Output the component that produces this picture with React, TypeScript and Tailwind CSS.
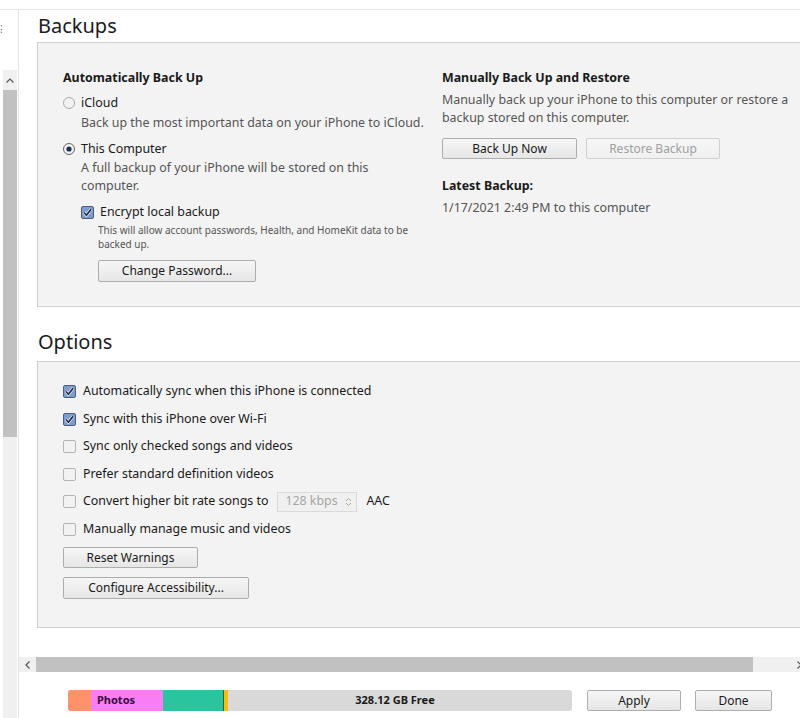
import { ReactNode } from 'react';

const FONT = { fontFamily: '"Noto Sans", "Open Sans", sans-serif' };

function Btn({ children, w, disabled }: { children: ReactNode; w: string; disabled?: boolean }) {
  return (
    <div
      className={`${w} h-[21px] flex items-center justify-center rounded-[2px] border border-[#adadad] bg-gradient-to-b from-[#f6f6f6] to-[#e6e6e6] text-[12px] leading-none ${
        disabled ? 'text-[#a0a0a0] border-[#d0d0d0] from-[#f4f4f4] to-[#f0f0f0]' : 'text-[#1a1a1a]'
      }`}
    >
      {children}
    </div>
  );
}

function Check({ on }: { on?: boolean }) {
  return (
    <svg width="13" height="13" viewBox="0 0 13 13" className="shrink-0">
      {on ? (
        <>
          <rect x="0.5" y="0.5" width="12" height="12" rx="1.5" fill="#7f9ccc" stroke="#4c5e80" />
          <path d="M3 6.5 L5.4 9.2 L10 3.4" fill="none" stroke="#fff" strokeWidth="3" />
          <path d="M3 6.5 L5.4 9.2 L10 3.4" fill="none" stroke="#1d2b4c" strokeWidth="1.7" />
        </>
      ) : (
        <rect x="0.5" y="0.5" width="12" height="12" rx="1.5" fill="#f2f2f2" stroke="#b4b4b4" />
      )}
    </svg>
  );
}

function Radio({ on }: { on?: boolean }) {
  return (
    <svg width="12" height="12" viewBox="0 0 12 12" className="shrink-0">
      <circle cx="6" cy="6" r="5.5" fill="#f2f2f2" stroke={on ? '#666' : '#aaa'} />
      {on && <circle cx="6" cy="6" r="2.6" fill="#1b2d55" />}
    </svg>
  );
}

function OptionRow({ on, children }: { on?: boolean; children: ReactNode }) {
  return (
    <div className="h-[27.5px] flex items-center gap-[7px] text-[12.4px] text-[#1a1a1a]">
      <Check on={on} />
      <div className="flex items-center">{children}</div>
    </div>
  );
}

export default function App() {
  return (
    <div className="w-[800px] h-[718px] bg-white overflow-hidden flex flex-col" style={FONT}>
      <div className="h-[10px] border-b border-[#e6e6e6] shrink-0" />
      <div className="flex flex-1 min-h-0">
        {/* left strip with vertical scrollbar */}
        <div className="w-[19px] shrink-0 border-r border-[#e3e3e3] flex flex-col">
          <div className="h-[60px] pt-[14px] text-[10px] text-[#666] leading-none">⁝</div>
          <div className="ml-[3px] w-[14px] flex-1 bg-[#f0f0f0] flex flex-col">
            <div className="h-[20px] flex items-center justify-center">
              <svg width="8" height="5" viewBox="0 0 8 5">
                <path d="M0.5 4.5 L4 1 L7.5 4.5" fill="none" stroke="#555" strokeWidth="1.2" />
              </svg>
            </div>
            <div className="h-[347px] bg-[#c1c1c1]" />
            <div className="flex-1" />
          </div>
        </div>

        {/* main */}
        <div className="flex-1 min-w-0 flex flex-col overflow-hidden">
          <div className="h-[647px] shrink-0 pl-[18px]">
            <h1 className="text-[20px] leading-[32px] text-[#1a1a1a] pl-px">Backups</h1>
            <div className="w-[800px] h-[265px] bg-[#f3f3f3] border border-[#cfcfcf] flex pt-[25px] pl-[25px] text-[12.4px]">
              <div className="w-[379px]">
                <div className="font-bold text-[#1a1a1a] leading-[20px]">Automatically Back Up</div>
                <div className="flex items-center gap-[6px] mt-[5px] text-[#1a1a1a] leading-[20px]">
                  <Radio />
                  iCloud
                </div>
                <div className="pl-[18px] text-[#555] leading-[20px]">
                  Back up the most important data on your iPhone to iCloud.
                </div>
                <div className="flex items-center gap-[6px] mt-[6px] text-[#1a1a1a] leading-[20px]">
                  <Radio on />
                  This Computer
                </div>
                <div className="pl-[18px] text-[#555] leading-[18px] w-[340px]">
                  A full backup of your iPhone will be stored on this computer.
                </div>
                <div className="pl-[18px] mt-[7px] flex items-center gap-[6px] text-[#1a1a1a] leading-[20px]">
                  <Check on />
                  Encrypt local backup
                </div>
                <div className="pl-[35px] text-[10px] text-[#555] leading-[14px] w-[350px] mt-[1px]">
                  This will allow account passwords, Health, and HomeKit data to be backed up.
                </div>
                <div className="pl-[35px] mt-[9px]">
                  <Btn w="w-[158px] !h-[22px]">Change Password...</Btn>
                </div>
              </div>
              <div className="w-[360px]">
                <div className="font-bold text-[#1a1a1a] leading-[20px]">Manually Back Up and Restore</div>
                <div className="text-[#555] leading-[18px] mt-[3px]">
                  Manually back up your iPhone to this computer or restore a backup stored on this computer.
                </div>
                <div className="flex gap-[9px] mt-[11px]">
                  <Btn w="w-[135px]">Back Up Now</Btn>
                  <Btn w="w-[134px]" disabled>
                    Restore Backup
                  </Btn>
                </div>
                <div className="font-bold text-[#1a1a1a] leading-[20px] mt-[17px]">Latest Backup:</div>
                <div className="text-[#555] leading-[20px] mt-[2px]">1/17/2021 2:49 PM to this computer</div>
              </div>
            </div>

            <h1 className="text-[20px] leading-[32px] text-[#1a1a1a] pl-px mt-[19px]">Options</h1>
            <div className="w-[800px] h-[267px] mt-[3px] bg-[#f3f3f3] border border-[#cfcfcf] pt-[16px] pl-[25px]">
              <OptionRow on>Automatically sync when this iPhone is connected</OptionRow>
              <OptionRow on>Sync with this iPhone over Wi-Fi</OptionRow>
              <OptionRow>Sync only checked songs and videos</OptionRow>
              <OptionRow>Prefer standard definition videos</OptionRow>
              <OptionRow>
                Convert higher bit rate songs to
                <div className="ml-[9px] w-[80px] h-[20px] border border-[#dadada] bg-[#f0f0f0] flex items-center justify-between pl-[7px] pr-[4px] text-[#a6a6a6]">
                  128 kbps
                  <svg width="7" height="10" viewBox="0 0 7 10">
                    <path d="M1 4 L3.5 1.5 L6 4 M1 6 L3.5 8.5 L6 6" fill="none" stroke="#a6a6a6" strokeWidth="1" />
                  </svg>
                </div>
                <span className="ml-[9px]">AAC</span>
              </OptionRow>
              <OptionRow>Manually manage music and videos</OptionRow>
              <div className="mt-[4px]">
                <Btn w="w-[135px]">Reset Warnings</Btn>
              </div>
              <div className="mt-[9px]">
                <Btn w="w-[186px] !h-[22px]">Configure Accessibility...</Btn>
              </div>
            </div>
          </div>

          {/* horizontal scrollbar */}
          <div className="h-[15px] shrink-0 flex bg-[#f0f0f0]">
            <div className="w-[17px] flex items-center justify-center">
              <svg width="5" height="8" viewBox="0 0 5 8">
                <path d="M4.5 0.5 L1 4 L4.5 7.5" fill="none" stroke="#555" strokeWidth="1.2" />
              </svg>
            </div>
            <div className="w-[717px] bg-[#c1c1c1]" />
            <div className="flex-1 flex items-center justify-end">
              <svg width="5" height="8" viewBox="0 0 5 8" className="-mr-[2px]">
                <path d="M0.5 0.5 L4 4 L0.5 7.5" fill="none" stroke="#555" strokeWidth="1.2" />
              </svg>
            </div>
          </div>

          {/* bottom bar */}
          <div className="flex-1 flex items-start pt-[18px] pl-[49px]">
            <div className="w-[504px] h-[21px] rounded-[3px] overflow-hidden flex bg-[#d9d9d9] text-[11px] font-bold text-[#1a1a1a]">
              <div className="w-[23px] bg-[#ff9268]" />
              <div className="w-[72px] bg-[#f77ef5] flex items-center pl-[6px] text-[#3a0a3a]">Photos</div>
              <div className="w-[60px] bg-[#2ac49f]" />
              <div className="w-[1px] bg-[#1a6650]" />
              <div className="w-[4px] bg-[#f3c10d]" />
              <div className="flex-1 flex items-center justify-center pr-[10px]">328.12 GB Free</div>
            </div>
            <div className="ml-[15px]">
              <Btn w="w-[94px]">Apply</Btn>
            </div>
            <div className="ml-[14px]">
              <Btn w="w-[77px]">Done</Btn>
            </div>
          </div>
        </div>
      </div>
    </div>
  );
}
